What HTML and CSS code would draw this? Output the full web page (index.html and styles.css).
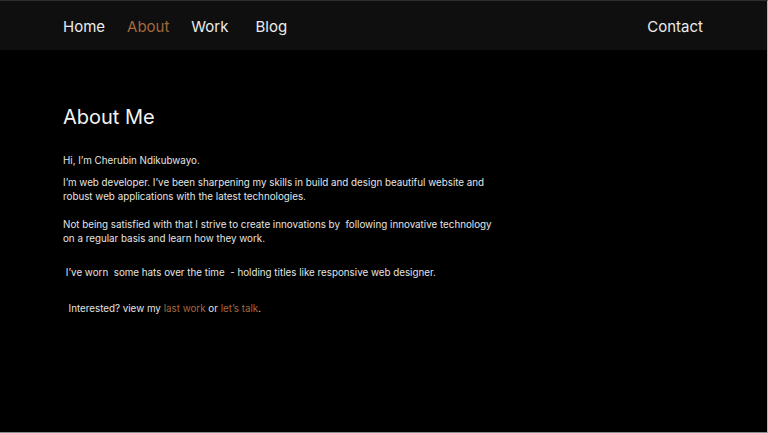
FILE: index.html
```html
<!DOCTYPE html>
<html lang="en">
<head>
<meta charset="utf-8">
<title>About Me</title>
<link rel="stylesheet" href="styles.css">
</head>
<body>
<header class="topbar">
  <nav class="nav-main">
    <a class="nav-link" href="#">Home</a>
    <a class="nav-link active" href="#">About</a>
    <a class="nav-link" href="#">Work</a>
    <a class="nav-link nav-blog" href="#">Blog</a>
  </nav>
  <a class="nav-link" href="#">Contact</a>
</header>
<main class="content">
  <h1 class="title">About Me</h1>
  <p class="para first">Hi, I’m Cherubin Ndikubwayo.</p>
  <p class="para">I’m web developer. I’ve been sharpening my skills in build and design beautiful website and robust web applications with the latest technologies.</p>
  <p class="para gap">Not being satisfied with that I strive to create innovations by&nbsp; following innovative technology on a regular basis and learn how they work.</p>
  <p class="para hats">&nbsp;I’ve worn&nbsp; some hats over the time&nbsp; - holding titles like responsive web designer.</p>
  <p class="para cta">&nbsp; Interested? view my <a class="accent" href="#">last work</a> or <a class="accent" href="#">let’s talk</a>.</p>
</main>
</body>
</html>
```
FILE: styles.css
```css
html, body {
  margin: 0;
  padding: 0;
}
body {
  height: 433px;
  box-sizing: border-box;
  background: #000;
  border-top: 1px solid #2e2e2e;
  border-right: 1px solid #b5b5b5;
  border-bottom: 1px solid #8a8a8a;
  font-family: "Inter", "Open Sans", sans-serif;
  color: #e6e6e6;
  overflow: hidden;
}
.topbar {
  height: 49px;
  background: #0f0f0f;
  display: flex;
  align-items: center;
  justify-content: space-between;
  padding: 2px 64px 0 63px;
  box-sizing: border-box;
}
.nav-main {
  display: flex;
  gap: 22px;
}
.nav-link {
  color: #ececec;
  text-decoration: none;
  font-size: 15px;
}
.nav-link.active {
  color: #a5683c;
}
.nav-blog {
  margin-left: 5px;
}
.content {
  padding: 55px 0 0 63px;
  max-width: 440px;
}
.title {
  margin: 0;
  font-weight: 400;
  font-size: 20px;
  color: #f2f2f2;
  line-height: 24px;
}
.para {
  margin: 0;
  font-size: 9.8px;
  line-height: 14.5px;
  color: #e4e4e4;
}
.first {
  margin-top: 25px;
}
.first + .para {
  margin-top: 7px;
}
.gap {
  margin-top: 13px;
}
.hats {
  margin-top: 19px;
}
.cta {
  margin-top: 22px;
}
.accent {
  color: #a5683c;
  text-decoration: none;
}
```
